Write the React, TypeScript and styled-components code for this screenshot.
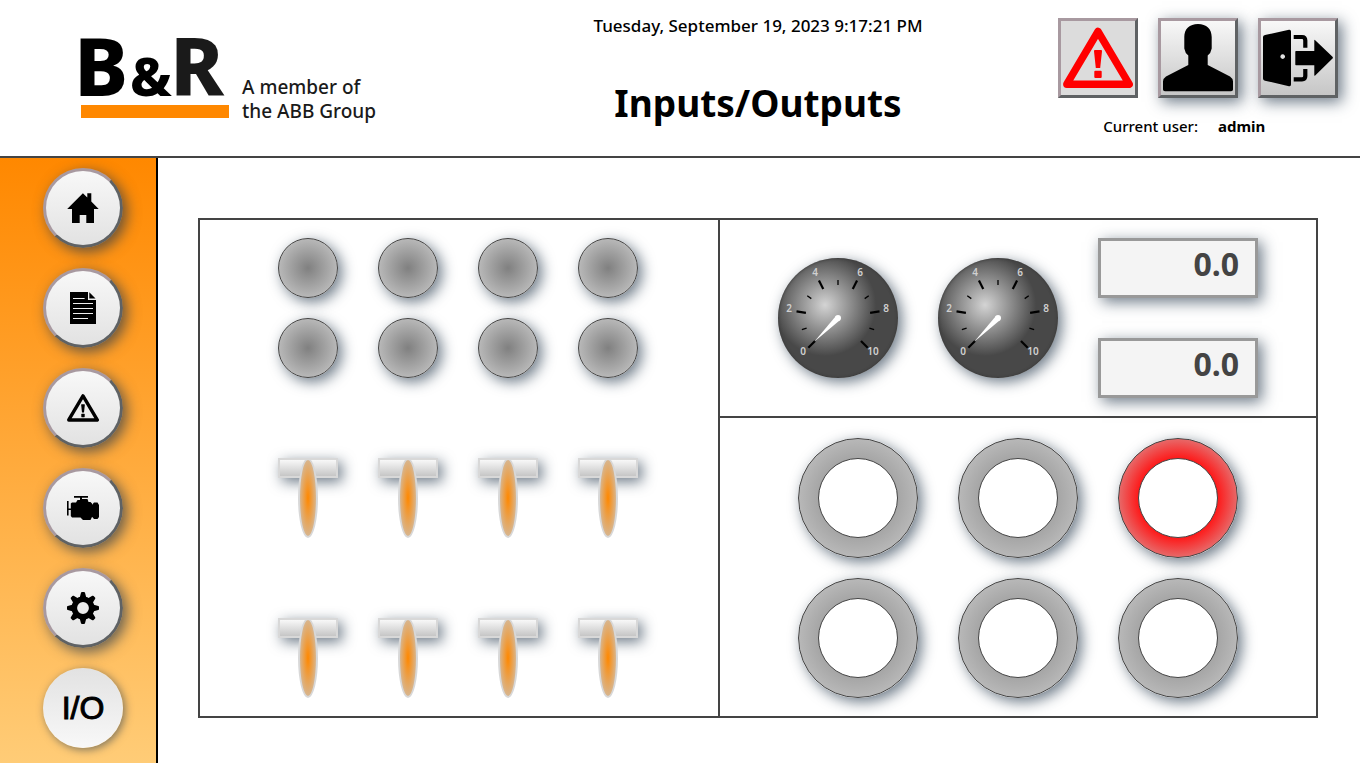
import React from "react";
import styled, { createGlobalStyle, css } from "styled-components";

const shadow = "4px 4px 14px rgba(32, 52, 72, 0.65)";
const line = "#444444";

const GlobalStyle = createGlobalStyle`
  *, *::before, *::after { box-sizing: border-box; }
  body {
    margin: 0;
    background: #ffffff;
    color: #000000;
    font-family: "Noto Sans", "Open Sans", sans-serif;
  }
`;

const Page = styled.div`
  display: flex;
  flex-direction: column;
  min-height: 100vh;
`;

const Header = styled.header`
  display: grid;
  grid-template-columns: 398px minmax(0, 1fr) 300px;
  height: 158px;
  padding: 0 22px 0 80px;
  border-bottom: 2px solid ${line};
`;

const Brand = styled.div`
  display: flex;
  align-items: flex-end;
  gap: 13px;
  height: 123px;
`;

const BrandMark = styled.svg`
  width: 149px;
  height: 100px;
  flex: none;
  overflow: visible;
`;

const Tagline = styled.p`
  margin: 0;
  color: #1a1a1a;
  font-size: 19px;
  font-weight: 500;
  line-height: 24px;
  white-space: nowrap;
`;

const Heading = styled.div`
  display: flex;
  flex-direction: column;
  align-items: center;
  gap: 40px;
  padding-top: 14px;
  white-space: nowrap;
`;

const Clock = styled.time`
  font-size: 17px;
  font-weight: 500;
  line-height: 24px;
`;

const Title = styled.h1`
  margin: 0;
  font-size: 37px;
  font-weight: 700;
  line-height: 50px;
`;

const Account = styled.div`
  display: flex;
  flex-direction: column;
  gap: 16px;
  padding-top: 18px;
`;

const Actions = styled.div`
  display: flex;
  justify-content: flex-end;
  gap: 20px;
`;

const bevel = css`
  border: 3px solid;
  border-color: #a899a0 #5f6264 #5f6264 #a899a0;
`;

const ActionButton = styled.button<{ $flat?: boolean }>`
  display: grid;
  place-items: center;
  width: 80px;
  height: 80px;
  padding: 0;
  ${bevel}
  background: ${(p) => (p.$flat ? "#dcdcdc" : "linear-gradient(#f8f8f8, #c6c6c6)")};
  box-shadow: ${(p) => (p.$flat ? "none" : shadow)};
  cursor: pointer;
`;

const UserLine = styled.dl`
  display: grid;
  grid-template-columns: 160px 1fr;
  column-gap: 20px;
  margin: 0;
  font-size: 15px;
  line-height: 24px;
`;

const UserLabel = styled.dt`
  font-weight: 500;
  text-align: right;
`;

const UserName = styled.dd`
  margin: 0;
  font-weight: 700;
`;

const Body = styled.div`
  display: flex;
  flex: 1;
`;

const Sidebar = styled.nav`
  display: flex;
  flex-direction: column;
  gap: 20px;
  flex: none;
  width: 158px;
  padding: 10px 0 15px 43px;
  border-right: 2px solid #000000;
  background: linear-gradient(#ff8800, #ffcc77);
`;

const NavButton = styled.button<{ $active?: boolean }>`
  display: grid;
  place-items: center;
  width: 80px;
  height: 80px;
  padding: 0;
  border-radius: 50%;
  color: #000000;
  font: 400 32px "Liberation Sans", Arial, sans-serif;
  -webkit-text-stroke: 1px #000000;
  cursor: pointer;
  ${(p) =>
    p.$active
      ? css`
          border: 0;
          background: linear-gradient(#e2e2e2, #f8f8f8);
          box-shadow: 2px 2px 8px rgba(40, 60, 80, 0.6);
        `
      : css`
          ${bevel}
          background: linear-gradient(#f8f8f8, #e2e2e2);
          box-shadow: 4px 4px 14px rgba(36, 56, 78, 0.7);
        `}
`;

const Main = styled.main`
  flex: 1;
  min-width: 0;
  padding: 60px 42px 45px 40px;
`;

const Board = styled.div`
  display: grid;
  grid-template-columns: minmax(0, 520fr) minmax(0, 596fr);
  border: 2px solid ${line};
`;

const DigitalArea = styled.section`
  display: flex;
  flex-direction: column;
  align-items: center;
  gap: 80px;
  padding: 18px 2px 18px 0;
  border-right: 2px solid ${line};
`;

const Bank = styled.div<{ $columns: number; $columnGap: number; $rowGap: number }>`
  display: grid;
  grid-template-columns: repeat(${(p) => p.$columns}, auto);
  justify-content: center;
  column-gap: ${(p) => p.$columnGap}px;
  row-gap: ${(p) => p.$rowGap}px;
`;

const Lamp = styled.div`
  width: 60px;
  height: 60px;
  border: 1px solid ${line};
  border-radius: 50%;
  background: radial-gradient(circle, #808080, #cfcfcf);
  box-shadow: ${shadow};
`;

const Toggle = styled.input`
  display: grid;
  grid-template: 20px 60px / 20px 20px 20px;
  width: 60px;
  height: 80px;
  margin: 0;
  appearance: none;
  cursor: pointer;

  &::before {
    content: "";
    grid-area: 1 / 1 / 2 / 4;
    border: 2px solid #d8d8d8;
    background: linear-gradient(#f8f8f8, #c6c6c6);
    box-shadow: ${shadow};
  }

  &::after {
    content: "";
    grid-area: 1 / 2 / 3 / 3;
    z-index: 1;
    border: 2px solid #d8d8d8;
    border-radius: 50%;
    background: radial-gradient(#ff8800, #c8c8c8);
  }
`;

const ProcessArea = styled.div`
  display: flex;
  flex-direction: column;
`;

const AnalogArea = styled.section`
  display: flex;
  align-items: center;
  justify-content: center;
  gap: 40px;
  height: 198px;
  border-bottom: 2px solid ${line};
`;

const Dial = styled.svg`
  flex: none;
  width: 120px;
  height: 120px;
  border-radius: 50%;
  background: radial-gradient(circle at 47px 47px, #d4d4d4, #484848 51px);
  box-shadow: ${shadow}, inset 0 0 3px #333333;
  font-family: "Noto Sans", "Open Sans", sans-serif;
`;

const Readouts = styled.div`
  display: flex;
  flex-direction: column;
  gap: 40px;
`;

const Readout = styled.input`
  width: 160px;
  height: 60px;
  padding: 0 16px 9px;
  border: 3px solid #999999;
  background: #f4f4f4;
  box-shadow: ${shadow};
  color: ${line};
  font: 700 32px "Noto Sans", "Open Sans", sans-serif;
  text-align: right;
`;

const ButtonArea = styled.section`
  padding: 20px 0 18px;
`;

const RingButton = styled.button<{ $alarm?: boolean }>`
  display: grid;
  place-items: center;
  width: 120px;
  height: 120px;
  padding: 0;
  border: 1px solid ${line};
  border-radius: 50%;
  background: ${(p) =>
    p.$alarm
      ? "radial-gradient(circle, #ff1414 46%, #cccccc)"
      : "radial-gradient(circle, #808080, #cfcfcf)"};
  box-shadow: ${shadow};
  cursor: pointer;

  &::before {
    content: "";
    width: 80px;
    height: 80px;
    border: 1px solid ${line};
    border-radius: 50%;
    background: #ffffff;
  }
`;

const WarningIcon = ({ size, color }: { size: number; color: string }) => (
  <svg width={size} height={size} viewBox="0 0 70 70" fill={color} aria-hidden="true">
    <path d="M35 8.500 66.200 61.200H3.800Z" fill="none" stroke={color} strokeWidth="7.400" strokeLinejoin="round" />
    <path d="M32 27h6q1.200 0 1 1.200L37.200 45h-4.400L31 28.200Q30.800 27 32 27Z" />
    <rect x="31.300" y="47.700" width="7.400" height="7.400" rx="1" />
  </svg>
);

const PersonIcon = () => (
  <svg width="70" height="70" viewBox="0 0 70 70" aria-hidden="true">
    <path d="M35 1C26.500 1 21.300 6 21.300 14V25.500Q22 30 25.300 32.500V42L3 53.500Q0 55.500 0 58.500V66.500Q0 68.300 2 68.300H68Q70 68.300 70 66.500V58.500Q70 55.500 67 53.500L44.700 42V32.500Q48 30 48.700 25.500V14C48.700 6 43.500 1 35 1Z" />
  </svg>
);

const ExitIcon = () => (
  <svg width="70" height="70" viewBox="0 0 70 70" aria-hidden="true">
    <path
      fillRule="evenodd"
      d="M2 12 26 6.800Q28 6.500 28 8.500V61.500Q28 63.600 26 63.200L2 57.700Q0 57.200 0 55.500V14Q0 12.400 2 12ZM19.700 31.300a2.300 2.300 0 1 0 .01 0Z"
    />
    <path d="M30.700 14H39Q42.300 14 42.300 17.500V24.700M30.700 56.300H39Q42.300 56.300 42.300 53V46" fill="none" stroke="#000" strokeWidth="4.200" />
    <path d="M33 28H51.300V17.500Q51.300 16.300 52.200 17.300L69.500 33.800Q70.300 34.700 69.500 35.600L52.200 52.400Q51.300 53.300 51.300 52V42.200H33Q32.300 42.200 32.300 41.500V28.700Q32.300 28 33 28Z" />
  </svg>
);

const HomeIcon = () => (
  <svg width="32" height="32" viewBox="0 0 32 32" aria-hidden="true">
    <path d="M15.900 1.200 20.300 5.500V1.200H24.300V9.500L31.700 17H27V31H19.300V23H12.700V31H5V17H.2Z" />
  </svg>
);

const DocumentIcon = () => (
  <svg width="32" height="32" viewBox="0 0 32 32" aria-hidden="true">
    <path d="M3 0H21V8H29V32H3ZM22.300.3 28.500 6.600H22.300Z" />
    <path d="M6 6.500H17.600M6 11.500H26M6 16.500H26M6 21.500H26M6 26.500H21" stroke="#f0f0f0" />
  </svg>
);

const EngineIcon = () => (
  <svg width="32" height="32" viewBox="0 0 32 32" aria-hidden="true">
    <path d="M7 4H21V5.800H15V7H20.500L21.500 10H23.500L25 11.500V25L23.500 28H16L13.500 25.500H5L3.800 24V18H1.600V23.500H0V9H1.600V16.500H3.800V11.500L5 10.500H9L10.500 8H13V5.800H7Z" />
    <path d="M27 10.500H30.500L32 13V25L30.500 27H27L24.800 24.500V13Z" />
  </svg>
);

const GearIcon = () => (
  <svg width="32" height="32" viewBox="0 0 32 32" aria-hidden="true">
    <circle cx="16" cy="16" r="8.700" fill="none" stroke="#000" strokeWidth="5.600" />
    {[0, 45, 90, 135, 180, 225, 270, 315].map((angle) => (
      <path key={angle} d="M12.600 6 14 .8Q14.200 0 15 0H17Q17.800 0 18 .8L19.400 6Z" transform={`rotate(${angle} 16 16)`} />
    ))}
  </svg>
);

const labels = [
  { value: 0, x: 25, y: 97 },
  { value: 2, x: 11, y: 54 },
  { value: 4, x: 37, y: 18 },
  { value: 6, x: 82, y: 18 },
  { value: 8, x: 108, y: 54 },
  { value: 10, x: 95, y: 97 },
];

const Gauge = ({ name }: { name: string }) => (
  <Dial viewBox="0 0 120 120" role="img" aria-label={name}>
    {Array.from({ length: 11 }, (_, step) => (
      <line
        key={step}
        x1="60"
        x2="60"
        y1={step % 2 ? 22 : 18}
        y2={step % 2 ? 27 : 27.5}
        stroke="#000"
        strokeWidth={step % 2 ? 1.3 : 2.2}
        transform={`rotate(${-135 + step * 27} 60 60)`}
      />
    ))}
    {labels.map((label) => (
      <text key={label.value} x={label.x} y={label.y} textAnchor="middle" fontSize="10" fontWeight="600" fill="#d0d0d0">
        {label.value}
      </text>
    ))}
    <path d="M36.500 83.500 57.900 57.900 62.100 62.100Z" fill="#fff" />
    <circle cx="60" cy="60" r="3" fill="#fff" />
  </Dial>
);

const pages = [
  { name: "Home", icon: <HomeIcon /> },
  { name: "Documents", icon: <DocumentIcon /> },
  { name: "Alarms", icon: <WarningIcon size={32} color="#000" /> },
  { name: "Motor", icon: <EngineIcon /> },
  { name: "Settings", icon: <GearIcon /> },
];

export default function App() {
  return (
    <Page>
      <GlobalStyle />
      <Header>
        <Brand>
          <BrandMark viewBox="0 0 149 100" role="img" aria-label="B&R">
            <g fontFamily="Noto Sans, Open Sans, sans-serif" fontWeight="800" fontSize="81">
              <text x="-6" y="73">B</text>
              <text x="50" y="73" fontSize="54">&amp;</text>
              <text x="90" y="73" fill="#1a1a1a">R</text>
            </g>
            <rect x="1" y="82" width="148" height="13" fill="#ff8800" />
          </BrandMark>
          <Tagline>
            A member of
            <br />
            the ABB Group
          </Tagline>
        </Brand>
        <Heading>
          <Clock dateTime="2023-09-19T21:17:21">Tuesday, September 19, 2023 9:17:21 PM</Clock>
          <Title>Inputs/Outputs</Title>
        </Heading>
        <Account>
          <Actions>
            <ActionButton $flat aria-label="Active alarms">
              <WarningIcon size={70} color="#ff0000" />
            </ActionButton>
            <ActionButton aria-label="User">
              <PersonIcon />
            </ActionButton>
            <ActionButton aria-label="Log out">
              <ExitIcon />
            </ActionButton>
          </Actions>
          <UserLine>
            <UserLabel>Current user:</UserLabel>
            <UserName>admin</UserName>
          </UserLine>
        </Account>
      </Header>
      <Body>
        <Sidebar aria-label="Pages">
          {pages.map((page) => (
            <NavButton key={page.name} aria-label={page.name}>
              {page.icon}
            </NavButton>
          ))}
          <NavButton $active aria-current="page">I/O</NavButton>
        </Sidebar>
        <Main>
          <Board>
            <DigitalArea aria-label="Digital channels">
              <Bank $columns={4} $columnGap={40} $rowGap={20}>
                {Array.from({ length: 8 }, (_, i) => (
                  <Lamp key={i} role="img" aria-label={`Input ${i + 1}`} />
                ))}
              </Bank>
              <Bank $columns={4} $columnGap={40} $rowGap={80}>
                {Array.from({ length: 8 }, (_, i) => (
                  <Toggle key={i} type="checkbox" aria-label={`Switch ${i + 1}`} />
                ))}
              </Bank>
            </DigitalArea>
            <ProcessArea>
              <AnalogArea aria-label="Analog channels">
                <Gauge name="Gauge 1" />
                <Gauge name="Gauge 2" />
                <Readouts>
                  <Readout aria-label="Value 1" defaultValue="0.0" />
                  <Readout aria-label="Value 2" defaultValue="0.0" />
                </Readouts>
              </AnalogArea>
              <ButtonArea aria-label="Push buttons">
                <Bank $columns={3} $columnGap={40} $rowGap={20}>
                  {Array.from({ length: 6 }, (_, i) => (
                    <RingButton key={i} $alarm={i === 2} aria-label={`Button ${i + 1}`} />
                  ))}
                </Bank>
              </ButtonArea>
            </ProcessArea>
          </Board>
        </Main>
      </Body>
    </Page>
  );
}
